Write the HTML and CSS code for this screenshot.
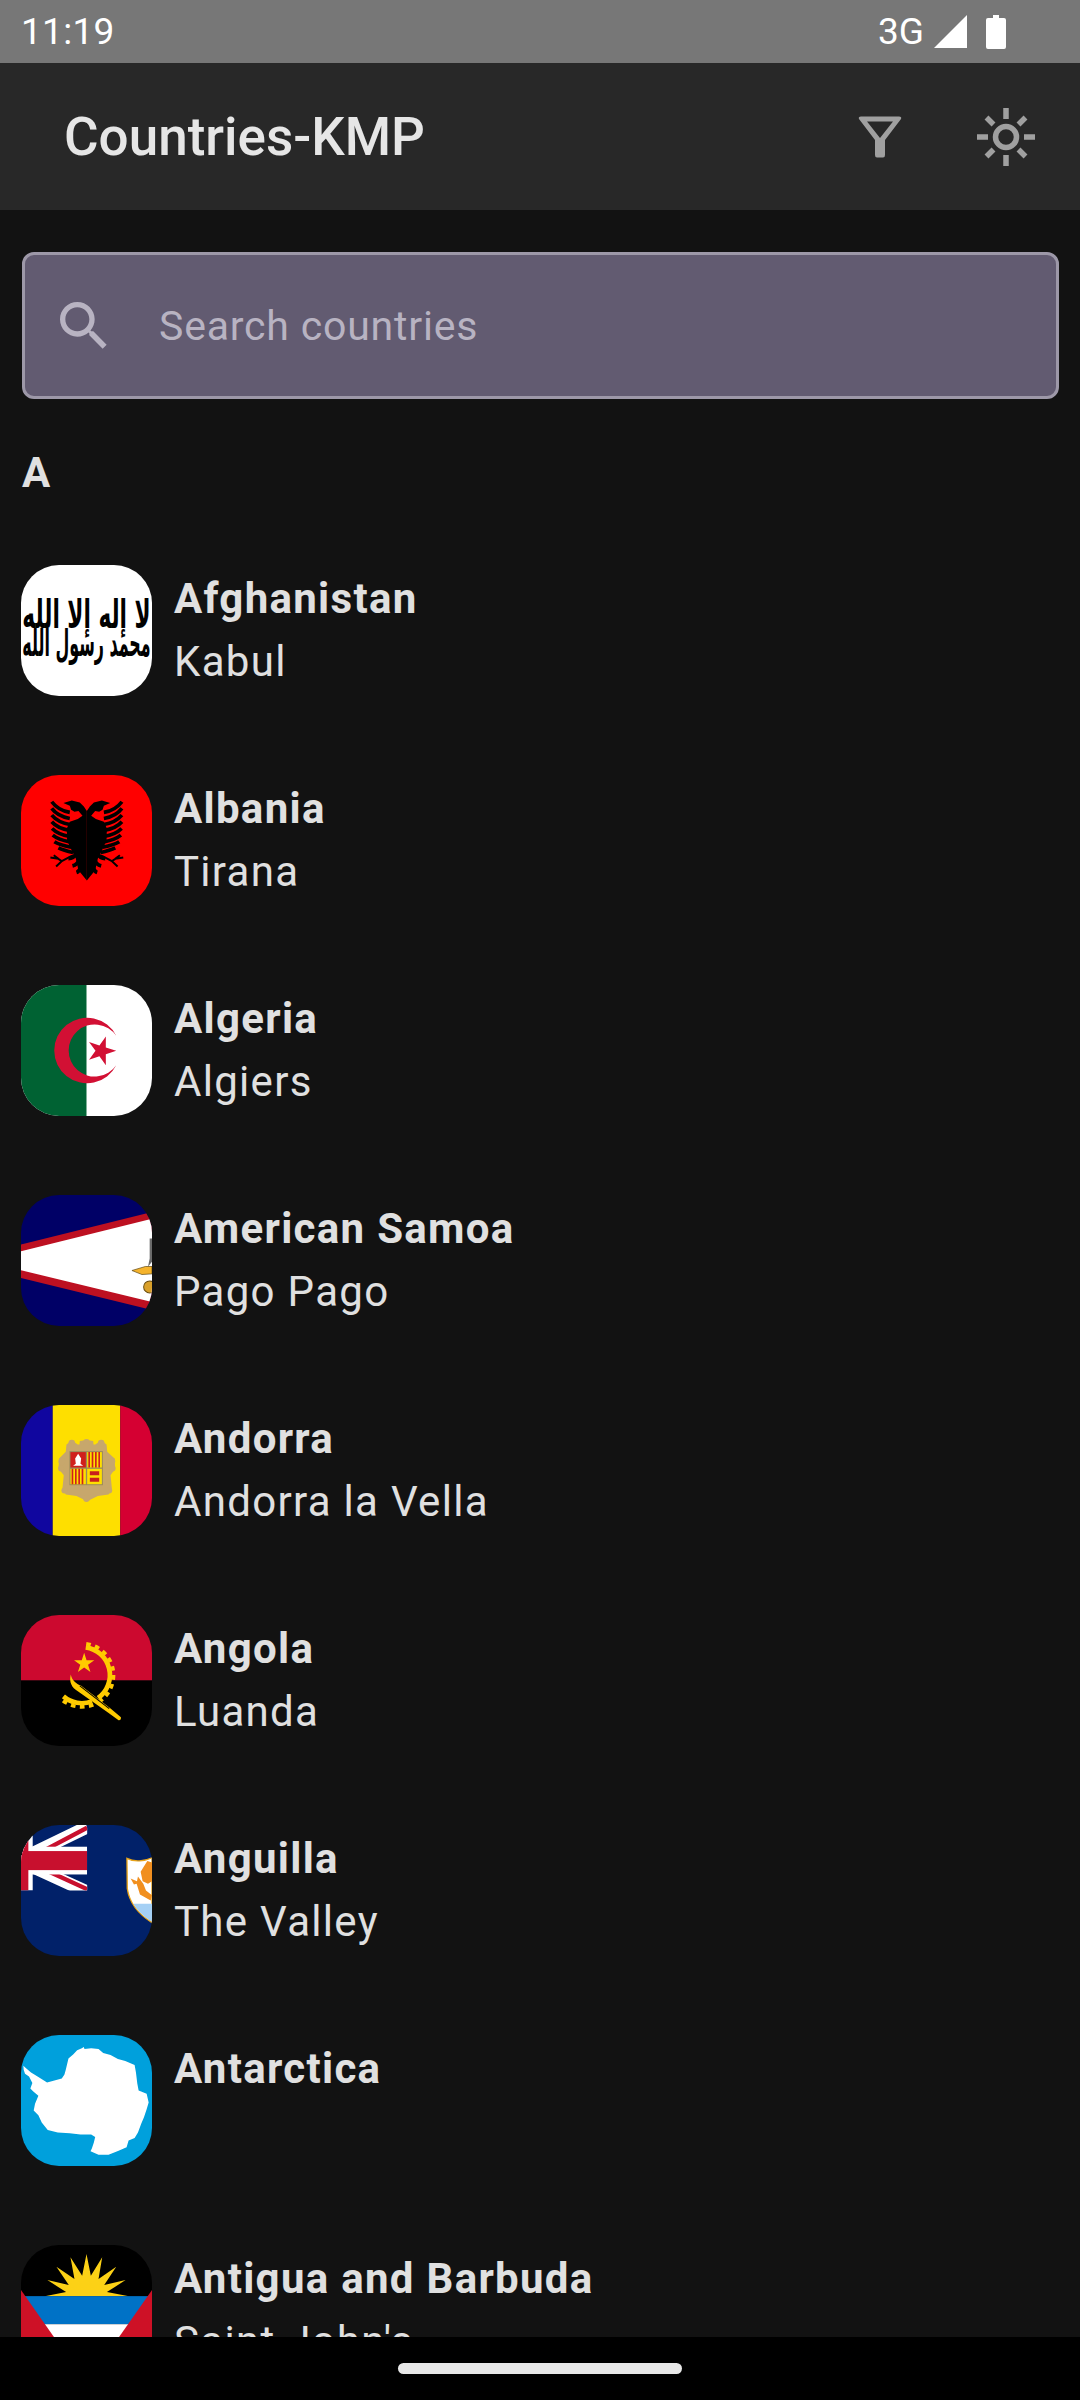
FILE: index.html
```html
<!DOCTYPE html>
<html lang="en">
<head>
<meta charset="utf-8">
<title>Countries-KMP</title>
<link rel="stylesheet" href="styles.css">
</head>
<body>
<div class="screen">
  <header class="status-bar">
    <span class="clock">11:19</span>
    <div class="status-icons">
      <span class="network">3G</span>
      <svg class="signal" viewBox="0 0 33 33"><path d="M0 33 33 0V33Z"/></svg>
      <svg class="battery" viewBox="0 0 20 34"><path d="M7 0H13V3H18Q20 3 20 5V32Q20 34 18 34H2Q0 34 0 32V5Q0 3 2 3H7Z"/></svg>
    </div>
  </header>

  <div class="app-bar">
    <h1 class="app-title">Countries-KMP</h1>
    <div class="actions">
      <div class="icon-btn">
        <svg viewBox="0 0 60 60"><path fill-rule="evenodd" d="M11 9.500H49Q52 9.500 51 12L35 33V48Q35 50.500 33 50.500H27Q25 50.500 25 48V33L9 12Q8 9.500 11 9.500ZM17 14.500H43L30 31Z"/></svg>
      </div>
      <div class="icon-btn">
        <svg viewBox="0 0 60 60"><g class="sun"><circle cx="30" cy="30" r="10.500"/><path d="M30 1V12M30 48V59M1 30H12M48 30H59M10.500 10.500 17.500 17.500M42.500 42.500 49.500 49.500M10.500 49.500 17.500 42.500M42.500 17.500 49.500 10.500"/></g></svg>
      </div>
    </div>
  </div>

  <main class="content">
    <div class="search">
      <svg class="search-icon" viewBox="0 0 24 24"><path d="M15.500 14h-.79l-.28-.27C15.410 12.590 16 11.110 16 9.500 16 5.910 13.090 3 9.500 3S3 5.910 3 9.500 5.910 16 9.500 16c1.610 0 3.090-.59 4.230-1.570l.27.28v.79l5 4.990L20.490 19l-4.990-5zm-6 0C7.010 14 5 11.990 5 9.500S7.010 5 9.500 5 14 7.010 14 9.500 11.990 14 9.500 14z"/></svg>
      <span class="search-placeholder">Search countries</span>
    </div>

    <h2 class="section-letter">A</h2>

    <ul class="country-list">
      <li class="country">
        <svg class="flag" viewBox="0 0 392 392">
          <rect width="392" height="392" fill="#fff"/>
          <g class="shahada">
            <text x="196" y="190" font-size="118" text-anchor="middle" textLength="384" lengthAdjust="spacingAndGlyphs">لا إله إلا الله</text>
            <text x="196" y="272" font-size="112" text-anchor="middle" textLength="384" lengthAdjust="spacingAndGlyphs">محمد رسول الله</text>
          </g>
        </svg>
        <div class="country-text"><span class="country-name">Afghanistan</span><span class="country-capital">Kabul</span></div>
      </li>

      <li class="country">
        <svg class="flag" viewBox="0 0 392 392">
          <rect width="392" height="392" fill="#f00"/>
          <g id="eagle-half">
            <path d="M197 108 188 94 176 82 152 76 127 84 146 92 150 104 160 110 172 108 184 122 170 132 146 140 137 160 138 196 150 222 164 250 172 285 197 316Z"/>
            <g class="feathers">
              <path d="M92 80C104 96 122 108 146 112"/>
              <path d="M92 100C104 116 122 126 146 130"/>
              <path d="M92 120C104 134 122 144 146 148"/>
              <path d="M92 140C104 154 122 162 146 166"/>
              <path d="M93 160C105 172 122 180 146 184"/>
              <path d="M95 180C107 190 124 196 146 200"/>
              <path d="M100 200C112 208 128 212 150 216"/>
              <path d="M112 218C124 224 138 228 156 232"/>
              <path d="M142 250C152 250 160 246 164 238"/>
              <path d="M154 272C162 270 170 264 172 256"/>
              <path d="M166 292C172 290 176 284 178 276"/>
            </g>
            <path class="claw" d="M88 247 112 251 122 258 105 274M112 251 98 240M122 258 150 243 166 238"/>
          </g>
          <use href="#eagle-half" transform="matrix(-1 0 0 1 394 0)"/>
        </svg>
        <div class="country-text"><span class="country-name">Albania</span><span class="country-capital">Tirana</span></div>
      </li>

      <li class="country">
        <svg class="flag" viewBox="0 0 392 392">
          <rect width="392" height="392" fill="#fff"/>
          <rect width="196" height="392" fill="#006233"/>
          <path fill="#d21034" fill-rule="evenodd" d="M285 152A98 98 0 1 0 285 240A78 78 0 1 1 285 152Z"/>
          <polygon fill="#d21034" points="285,197 253.800,187 253.900,154.200 234.700,180.800 203.600,170.600 223,197 203.600,223.400 234.700,213.200 253.900,239.800 253.800,207"/>
        </svg>
        <div class="country-text"><span class="country-name">Algeria</span><span class="country-capital">Algiers</span></div>
      </li>

      <li class="country">
        <svg class="flag" viewBox="0 0 392 392">
          <rect width="392" height="392" fill="#006"/>
          <polygon fill="#bd1021" points="0,148 392,51 392,344 0,248"/>
          <polygon fill="#fff" points="0,168 392,71 392,320 0,225"/>
          <path fill="#6b6b6b" d="M385 130H392V200L380 215 385 190Z"/>
          <polygon fill="#f5b32c" stroke="#5a4310" stroke-width="2" points="332,226 372,214 392,214 392,236 362,238"/>
          <circle cx="385" cy="275" r="18" fill="#d9a02a" stroke="#6b4f12" stroke-width="3"/>
        </svg>
        <div class="country-text"><span class="country-name">American Samoa</span><span class="country-capital">Pago Pago</span></div>
      </li>

      <li class="country">
        <svg class="flag" viewBox="0 0 392 392">
          <rect width="95" height="392" fill="#10069f"/>
          <rect x="95" width="202" height="392" fill="#fedf00"/>
          <rect x="297" width="95" height="392" fill="#d50032"/>
          <g class="crest">
            <path d="M136 118 152 106 170 118H175L176 108 196 105 216 108 217 118H222L240 106 256 118 258 140 280 160 282 190 268 210 272 250 262 268 230 272 198 288 166 272 134 268 124 250 128 210 112 190 114 160 134 140Z"/>
            <circle cx="122" cy="168" r="10"/>
            <circle cx="272" cy="168" r="10"/>
            <circle cx="120" cy="190" r="9"/>
            <circle cx="274" cy="190" r="9"/>
            <circle cx="152" cy="114" r="10"/>
            <circle cx="240" cy="114" r="10"/>
            <circle cx="196" cy="112" r="10"/>
            <circle cx="130" cy="256" r="9"/>
            <circle cx="264" cy="256" r="9"/>
            <circle cx="196" cy="280" r="10"/>
          </g>
          <rect x="145" y="138" width="100" height="102" fill="#9a8a5c"/>
          <rect x="148" y="141" width="46" height="46" fill="#d0201c"/>
          <path fill="#fff" d="M171 146 180 160 178 176 186 182H156L164 176 162 160Z"/>
          <rect x="198" y="141" width="44" height="46" fill="#fedf00"/>
          <path class="pallets" d="M204 141V187M214 141V187M224 141V187M234 141V187"/>
          <rect x="148" y="191" width="46" height="46" fill="#fedf00"/>
          <path class="pallets" d="M154 191V237M164 191V237M174 191V237M184 191V237"/>
          <rect x="198" y="191" width="44" height="46" fill="#fedf00"/>
          <path fill="#c8201c" d="M206 198H234V210H206ZM206 218H234V230H206Z"/>
        </svg>
        <div class="country-text"><span class="country-name">Andorra</span><span class="country-capital">Andorra la Vella</span></div>
      </li>

      <li class="country">
        <svg class="flag" viewBox="0 0 392 392">
          <rect width="392" height="196" fill="#cc092f"/>
          <rect y="196" width="392" height="196" fill="#000"/>
          <path class="gear-ring" d="M193.700 96.800A84 84 0 0 1 230.800 248.400M212.400 258.300A84 84 0 0 1 127 243.500"/>
          <path class="gear-teeth" d="M195.200 86A95 95 0 0 1 237.200 257.300M216.400 268.500A95 95 0 0 1 119.800 251.800"/>
          <polygon fill="#ffcb00" points="189,113 196.200,135.100 219.400,135.100 200.600,148.800 207.800,170.900 189,157.200 170.200,170.900 177.400,148.800 158.600,135.100 181.800,135.100"/>
          <path fill="#ffcb00" d="M149 178C143 200 152 218 170 228L258 290 292 315Q300 316 299 306L268 280 180 212C165 205 152 196 149 178Z"/>
          <path class="machete-line" d="M176 212 264 280"/>
        </svg>
        <div class="country-text"><span class="country-name">Angola</span><span class="country-capital">Luanda</span></div>
      </li>

      <li class="country">
        <svg class="flag" viewBox="0 0 392 392">
          <rect width="392" height="392" fill="#012169"/>
          <svg x="0" y="0" width="198" height="196" viewBox="0 0 198 196">
            <path class="uk-white" d="M-8 106 198 6M-8 106 198 200"/>
            <path class="uk-red" d="M24 100 198 8M24 112 198 192"/>
            <rect y="65" width="198" height="83" fill="#fff"/>
            <rect width="35" height="196" fill="#fff"/>
            <rect y="78" width="198" height="57" fill="#c8102e"/>
            <rect width="22" height="196" fill="#c8102e"/>
          </svg>
          <path fill="#fff" stroke="#e8a317" stroke-width="4" d="M317 100C340 112 370 108 392 98V292C360 272 325 240 318 190Z"/>
          <path fill="#a5d0f5" d="M336 236H392V290C366 274 348 256 336 236Z"/>
          <path fill="#f18f1f" d="M378 108 358 140 364 168 380 176 392 168V112ZM328 160 338 178 346 176 356 208 388 226 392 210 374 196 366 176 350 154 347 168Z"/>
        </svg>
        <div class="country-text"><span class="country-name">Anguilla</span><span class="country-capital">The Valley</span></div>
      </li>

      <li class="country">
        <svg class="flag" viewBox="0 0 392 392">
          <rect width="392" height="392" fill="#00a0dc"/>
          <path fill="#fff" d="M7 92 16 100 30 112 52 126 78 142 100 136 122 130 130 118 134 104 142 70 156 58 168 46 182 40 188 36 190 42 210 40 232 42 246 54 268 60 290 72 312 78 340 90 344 112 348 145 352 166 376 176 382 202 376 222 368 246 360 265 350 292 340 308 322 316 316 336 292 346 262 358 232 358 208 348 212 340 218 322 222 305 210 298 178 298 146 294 110 292 80 284 62 262 52 240 38 226 42 206 52 182 36 168 28 160 34 144 24 124 12 116 8 104Z"/>
        </svg>
        <div class="country-text"><span class="country-name">Antarctica</span></div>
      </li>

      <li class="country">
        <svg class="flag" viewBox="0 0 392 392">
          <rect width="392" height="392" fill="#000"/>
          <polygon fill="#fcd116" points="71,153 135,141 79,105 143,120 106,65 160,102 148,37 183,92 196,27 209,92 243,37 232,102 285,65 249,120 313,105 257,141 323,153"/>
          <rect y="153" width="392" height="84" fill="#0072c6"/>
          <rect y="237" width="392" height="155" fill="#fff"/>
          <polygon fill="#ce1126" points="0,135 196,414 0,414"/>
          <polygon fill="#ce1126" points="392,135 196,414 392,414"/>
        </svg>
        <div class="country-text"><span class="country-name">Antigua and Barbuda</span><span class="country-capital">Saint John's</span></div>
      </li>
    </ul>
  </main>

  <footer class="nav-bar"><span class="nav-handle"></span></footer>
</div>
</body>
</html>
```

FILE: styles.css
```css
* {
  box-sizing: border-box;
}

html,
body {
  margin: 0;
  padding: 0;
  background: #121212;
}

.screen {
  width: 1080px;
  height: 2400px;
  display: flex;
  flex-direction: column;
  overflow: hidden;
  font-family: Roboto, "Liberation Sans", sans-serif;
  color: #e0e0e0;
  background: #121212;
}

.status-bar {
  flex: 0 0 63px;
  display: flex;
  align-items: center;
  justify-content: space-between;
  padding: 0 74px 0 21px;
  background: #777777;
  color: #ffffff;
  font-size: 37px;
}

.clock {
  letter-spacing: 0.300px;
}

.status-icons {
  display: flex;
  align-items: center;
}

.network {
  margin-right: 10px;
}

.signal {
  width: 33px;
  height: 33px;
  fill: #ffffff;
  margin-right: 19px;
}

.battery {
  width: 20px;
  height: 34px;
  fill: #ffffff;
}

.app-bar {
  flex: 0 0 147px;
  display: flex;
  align-items: center;
  justify-content: space-between;
  padding: 0 11px 0 64px;
  background: #282828;
}

.app-title {
  margin: 0;
  font-size: 53px;
  font-weight: 500;
  color: #e6e6e6;
}

.actions {
  display: flex;
}

.icon-btn {
  width: 126px;
  height: 126px;
  display: flex;
  align-items: center;
  justify-content: center;
}

.icon-btn svg {
  width: 60px;
  height: 60px;
  fill: #a0a0a0;
}

.sun {
  fill: none;
  stroke: #a0a0a0;
  stroke-width: 5.500;
}

.content {
  flex: 1 1 0;
  min-height: 0;
  overflow: hidden;
  padding: 42px 21px 0 22px;
}

.search {
  height: 147px;
  display: flex;
  align-items: center;
  padding-left: 27px;
  background: #625b71;
  border: 3px solid #9d98a8;
  border-radius: 12px;
}

.search-icon {
  width: 64px;
  height: 64px;
  fill: #b8b3c2;
  flex: none;
}

.search-placeholder {
  margin-left: 43px;
  font-size: 41px;
  letter-spacing: 0.800px;
  color: #b8b3c2;
}

.section-letter {
  margin: 0;
  height: 126px;
  padding-top: 49px;
  font-size: 42px;
  font-weight: 700;
  line-height: 49px;
  color: #e0e0e0;
}

.country-list {
  list-style: none;
  margin: 0 0 0 -1px;
  padding: 0;
}

.country {
  height: 210px;
  padding-top: 40px;
  display: flex;
  align-items: flex-start;
  gap: 22px;
}

.flag {
  width: 131px;
  height: 131px;
  flex: none;
  border-radius: 38px;
  display: block;
}

.country-text {
  display: flex;
  flex-direction: column;
  padding-top: 2px;
}

.country-name,
.country-capital {
  font-size: 42px;
  line-height: 63px;
  letter-spacing: 1.300px;
  white-space: nowrap;
  color: #e0e0e0;
}

.country-name {
  font-weight: 700;
}

.country-capital {
  font-weight: 400;
}

.nav-bar {
  flex: 0 0 63px;
  display: flex;
  justify-content: center;
  padding-top: 26px;
  background: #000000;
}

.nav-handle {
  width: 284px;
  height: 11px;
  border-radius: 6px;
  background: #e8e8e8;
}

/* flag artwork */
.shahada {
  font-family: "DejaVu Sans", sans-serif;
  font-weight: 700;
  fill: #000000;
}

.feathers path {
  fill: none;
  stroke: #000000;
  stroke-width: 11;
  stroke-linecap: butt;
}

.claw {
  fill: none;
  stroke: #000000;
  stroke-width: 6;
}

.crest {
  fill: #c7a76c;
}

.pallets {
  fill: none;
  stroke: #d0201c;
  stroke-width: 5;
}

.gear-ring {
  fill: none;
  stroke: #ffcb00;
  stroke-width: 14;
}

.gear-teeth {
  fill: none;
  stroke: #ffcb00;
  stroke-width: 11;
  stroke-dasharray: 14 13;
}

.machete-line {
  fill: none;
  stroke: #000000;
  stroke-width: 3;
}

.uk-white {
  fill: none;
  stroke: #ffffff;
  stroke-width: 38;
}

.uk-red {
  fill: none;
  stroke: #c8102e;
  stroke-width: 13;
}
```
